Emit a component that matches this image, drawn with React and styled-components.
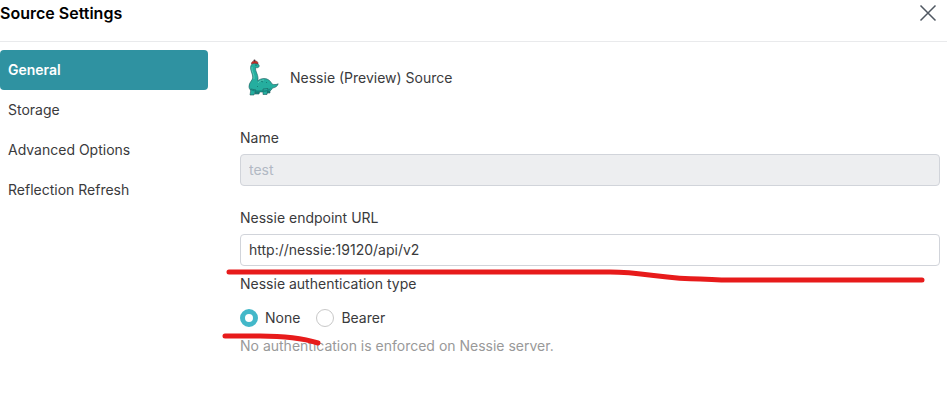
import React, { useState } from "react";
import styled, { createGlobalStyle } from "styled-components";

const GlobalStyle = createGlobalStyle`
  *, *::before, *::after { box-sizing: border-box; }
  body {
    margin: 0;
    background: #fff;
    color: #3a3a3c;
    font-family: Inter, "Liberation Sans", sans-serif;
    font-size: 14px;
    line-height: 20px;
  }
  button, input { font: inherit; color: inherit; }
`;

const Header = styled.header`
  display: flex;
  align-items: flex-start;
  justify-content: space-between;
  height: 42px;
  padding: 3px 8px 0 0;
  border-bottom: 1px solid #e9eaec;
`;

const Title = styled.h1`
  margin: 0;
  color: #000;
  font-size: 16px;
  line-height: 20px;
  font-weight: 600;
`;

const CloseButton = styled.button`
  display: flex;
  padding: 0;
  border: 0;
  background: none;
  color: #505862;
  cursor: pointer;
`;

const Layout = styled.div`
  display: grid;
  grid-template-columns: 208px minmax(0, 1fr);
  column-gap: 32px;
  padding-right: 7px;
`;

const Nav = styled.nav`
  display: flex;
  flex-direction: column;
  padding-top: 8px;
`;

const NavLink = styled.a`
  padding: 10px 8px;
  border-radius: 4px;
  color: ${(p) => (p.$active ? "#fff" : "#3a3a3c")};
  background: ${(p) => (p.$active ? "#2f92a1" : "transparent")};
  font-weight: ${(p) => (p.$active ? 600 : 400)};
  text-decoration: none;
`;

const Form = styled.form`
  padding-top: 16px;
`;

const SourceHeading = styled.div`
  display: flex;
  align-items: center;
  gap: 10px;
  margin-bottom: 30px;
`;

const Field = styled.div`
  position: relative;
  display: flex;
  flex-direction: column;
  gap: 6px;
  margin-bottom: ${(p) => p.$after}px;
`;

const TextInput = styled.input`
  width: 100%;
  height: 32px;
  padding: 0 8px 1px;
  border: 1px solid #d1d4da;
  border-radius: 4px;
  background: #fff;
  outline: none;

  &:disabled {
    background: #edeef0;
    color: #b2b9c4;
  }
`;

const Group = styled.fieldset`
  min-width: 0;
  margin: 0;
  padding: 0;
  border: 0;
`;

const Legend = styled.legend`
  padding: 0;
  margin-bottom: 14px;
`;

const Options = styled.div`
  position: relative;
  display: flex;
  gap: 16px;
`;

const Option = styled.label`
  display: flex;
  align-items: center;
  gap: 7px;
`;

const Radio = styled.input`
  appearance: none;
  width: 18px;
  height: 18px;
  margin: 0;
  border: 1px solid #c8c8c8;
  border-radius: 50%;
  background: #fff;

  &:checked { border: 5px solid #43b8c9; }
`;

const Hint = styled.p`
  margin: 8px 0 0;
  color: #999;
`;

const LongStroke = styled.svg`
  position: absolute;
  left: -15px;
  top: 58px;
  width: calc(100% + 2px);
  height: 20px;
  pointer-events: none;
`;

const ShortStroke = styled.svg`
  position: absolute;
  z-index: 1;
  left: -20px;
  top: 22px;
  width: 104px;
  height: 20px;
  pointer-events: none;
`;

function Nessie() {
  return (
    <svg width="40" height="40" viewBox="0 0 40 40" aria-hidden="true">
      <g stroke="#1b5a5c" strokeWidth="0.6" strokeLinejoin="round">
        <path fill="#178f88" d="M16 32l-1 4h4l1-4zM26 31l1 4h3v-5z" />
        <path
          fill="#25ae9f"
          d="M18.500 6.500C16.500 4.500 12 4.500 10.800 8c-1.300 4 2.400 8 1.900 12-.4 2.500-3.700 4.500-3.700 8.500 0 3.500 3 5.500 7 5.500h9c4 0 6.500-1.500 7.500-4 2.500-.3 5-1.500 5.700-4.200-2 1-4.500 1-6.200.2-1.500-3.500-4.500-5.500-8-5.500-2.500 0-4.800 1-6.300 2.500 1.600-5.500-2.700-9.500-2.200-13.500 1.200.6 3 .2 3.500-.8.300-.8.200-1.700-.5-2.200z"
        />
        <path fill="#25ae9f" d="M11 31l-1 6h4l2-5zM23 31v5.500h4l1-6z" />
      </g>
      <path fill="#14847e" d="M10 29c1 3 4 3.500 7 3.500h7c3 0 5-1 7-3-1 3-3.500 4.200-6.500 4.200h-8c-3.500 0-6-1.500-6.500-4.700z" />
      <path fill="none" stroke="#62cfba" strokeWidth="0.8" d="M12 9c-1 4 3 8 2 12M18 25c1.500-2 4-3 6-3" />
      <path fill="none" stroke="#14746f" strokeWidth="0.8" d="M21 23l2 1M26 24l1 1M17 28l1 1" />
      <path fill="#d02c24" stroke="#54252a" strokeWidth="0.5" d="M11.500 6c-.3-2 1.500-3.200 3.500-3 2 0 3.300 1 3 3-2-1-4.500-1-6.500 0z" />
      <circle cx="14.500" cy="2.500" r="1" fill="#472d34" />
      <circle cx="16" cy="7" r="0.600" fill="#142f35" />
    </svg>
  );
}

const sections = ["General", "Storage", "Advanced Options", "Reflection Refresh"];

export default function App() {
  const [url, setUrl] = useState("http://nessie:19120/api/v2");
  const [auth, setAuth] = useState("None");

  return (
    <>
      <GlobalStyle />
      <Header>
        <Title>Source Settings</Title>
        <CloseButton type="button" aria-label="Close">
          <svg width="22" height="20" viewBox="0 0 22 20" fill="none" stroke="currentColor" strokeWidth="1.5">
            <path d="M3.500 2.500l15 15M18.500 2.500l-15 15" />
          </svg>
        </CloseButton>
      </Header>
      <Layout>
        <Nav aria-label="Settings sections">
          {sections.map((name, i) => (
            <NavLink key={name} href="#" $active={i === 0} aria-current={i === 0 ? "page" : undefined}>
              {name}
            </NavLink>
          ))}
        </Nav>
        <Form>
          <SourceHeading>
            <Nessie />
            <span>Nessie (Preview) Source</span>
          </SourceHeading>
          <Field $after={22}>
            <label htmlFor="name">Name</label>
            <TextInput id="name" value="test" disabled />
          </Field>
          <Field $after={8}>
            <label htmlFor="url">Nessie endpoint URL</label>
            <TextInput id="url" value={url} onChange={(e) => setUrl(e.target.value)} />
            <LongStroke viewBox="0 0 702 20" preserveAspectRatio="none" aria-hidden="true">
              <path
                d="M4 6H385C418 6 440 13 475 13C485 13 490 14 505 14H697"
                fill="none"
                stroke="#e71b1b"
                strokeWidth="5"
                strokeLinecap="round"
              />
            </LongStroke>
          </Field>
          <Group>
            <Legend>Nessie authentication type</Legend>
            <Options>
              {["None", "Bearer"].map((type) => (
                <Option key={type}>
                  <Radio type="radio" name="auth" checked={auth === type} onChange={() => setAuth(type)} />
                  {type}
                </Option>
              ))}
              <ShortStroke viewBox="0 0 104 20" aria-hidden="true">
                <path
                  d="M5 6H40C66 6 82 8 98 13"
                  fill="none"
                  stroke="#e71b1b"
                  strokeWidth="5"
                  strokeLinecap="round"
                />
              </ShortStroke>
            </Options>
            <Hint>No authentication is enforced on Nessie server.</Hint>
          </Group>
        </Form>
      </Layout>
    </>
  );
}
